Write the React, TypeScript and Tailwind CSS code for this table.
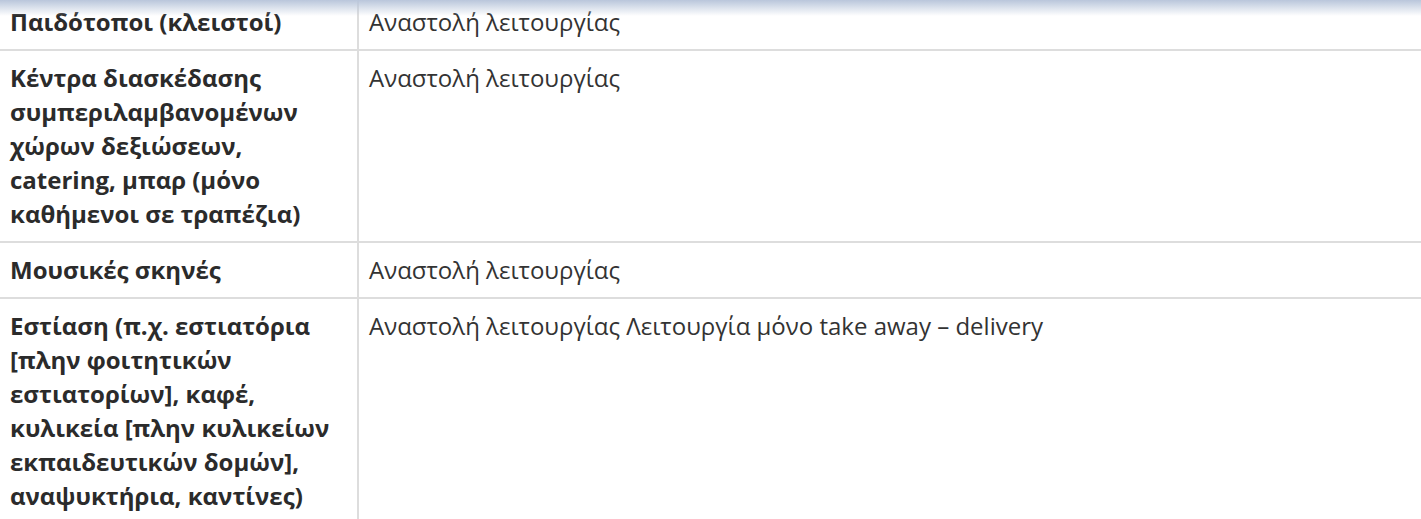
const rows = [
  {
    label: 'Παιδότοποι (κλειστοί)',
    value: 'Αναστολή λειτουργίας',
  },
  {
    label: 'Κέντρα διασκέδασης συμπεριλαμβανομένων χώρων δεξιώσεων, catering, μπαρ (μόνο καθήμενοι σε τραπέζια)',
    value: 'Αναστολή λειτουργίας',
  },
  {
    label: 'Μουσικές σκηνές',
    value: 'Αναστολή λειτουργίας',
  },
  {
    label: 'Εστίαση (π.χ. εστιατόρια [πλην φοιτητικών εστιατορίων], καφέ, κυλικεία [πλην κυλικείων εκπαιδευτικών δομών], αναψυκτήρια, καντίνες)',
    value: 'Αναστολή λειτουργίας Λειτουργία μόνο take away – delivery',
  },
]

export default function App() {
  return (
    <div className="relative h-[519px] overflow-hidden bg-white font-['Open_Sans',sans-serif] text-[24px] leading-[34px] text-[#333]">
      <table className="-mt-[7px] w-full border-collapse">
        <tbody>
          {rows.map((r, i) => (
            <tr key={i} className="border-y-2 border-[#dddddd]">
              <td className="w-[358px] border-r-2 border-[#dddddd] px-[10px] py-[10px] align-top font-bold text-[#2b2b2b]">
                {r.label}
              </td>
              <td className="px-[10px] py-[10px] align-top">{r.value}</td>
            </tr>
          ))}
        </tbody>
      </table>
      <div className="pointer-events-none absolute inset-x-0 top-0 h-[16px] bg-gradient-to-b from-[#b9c6db] to-white/0" />
    </div>
  )
}
